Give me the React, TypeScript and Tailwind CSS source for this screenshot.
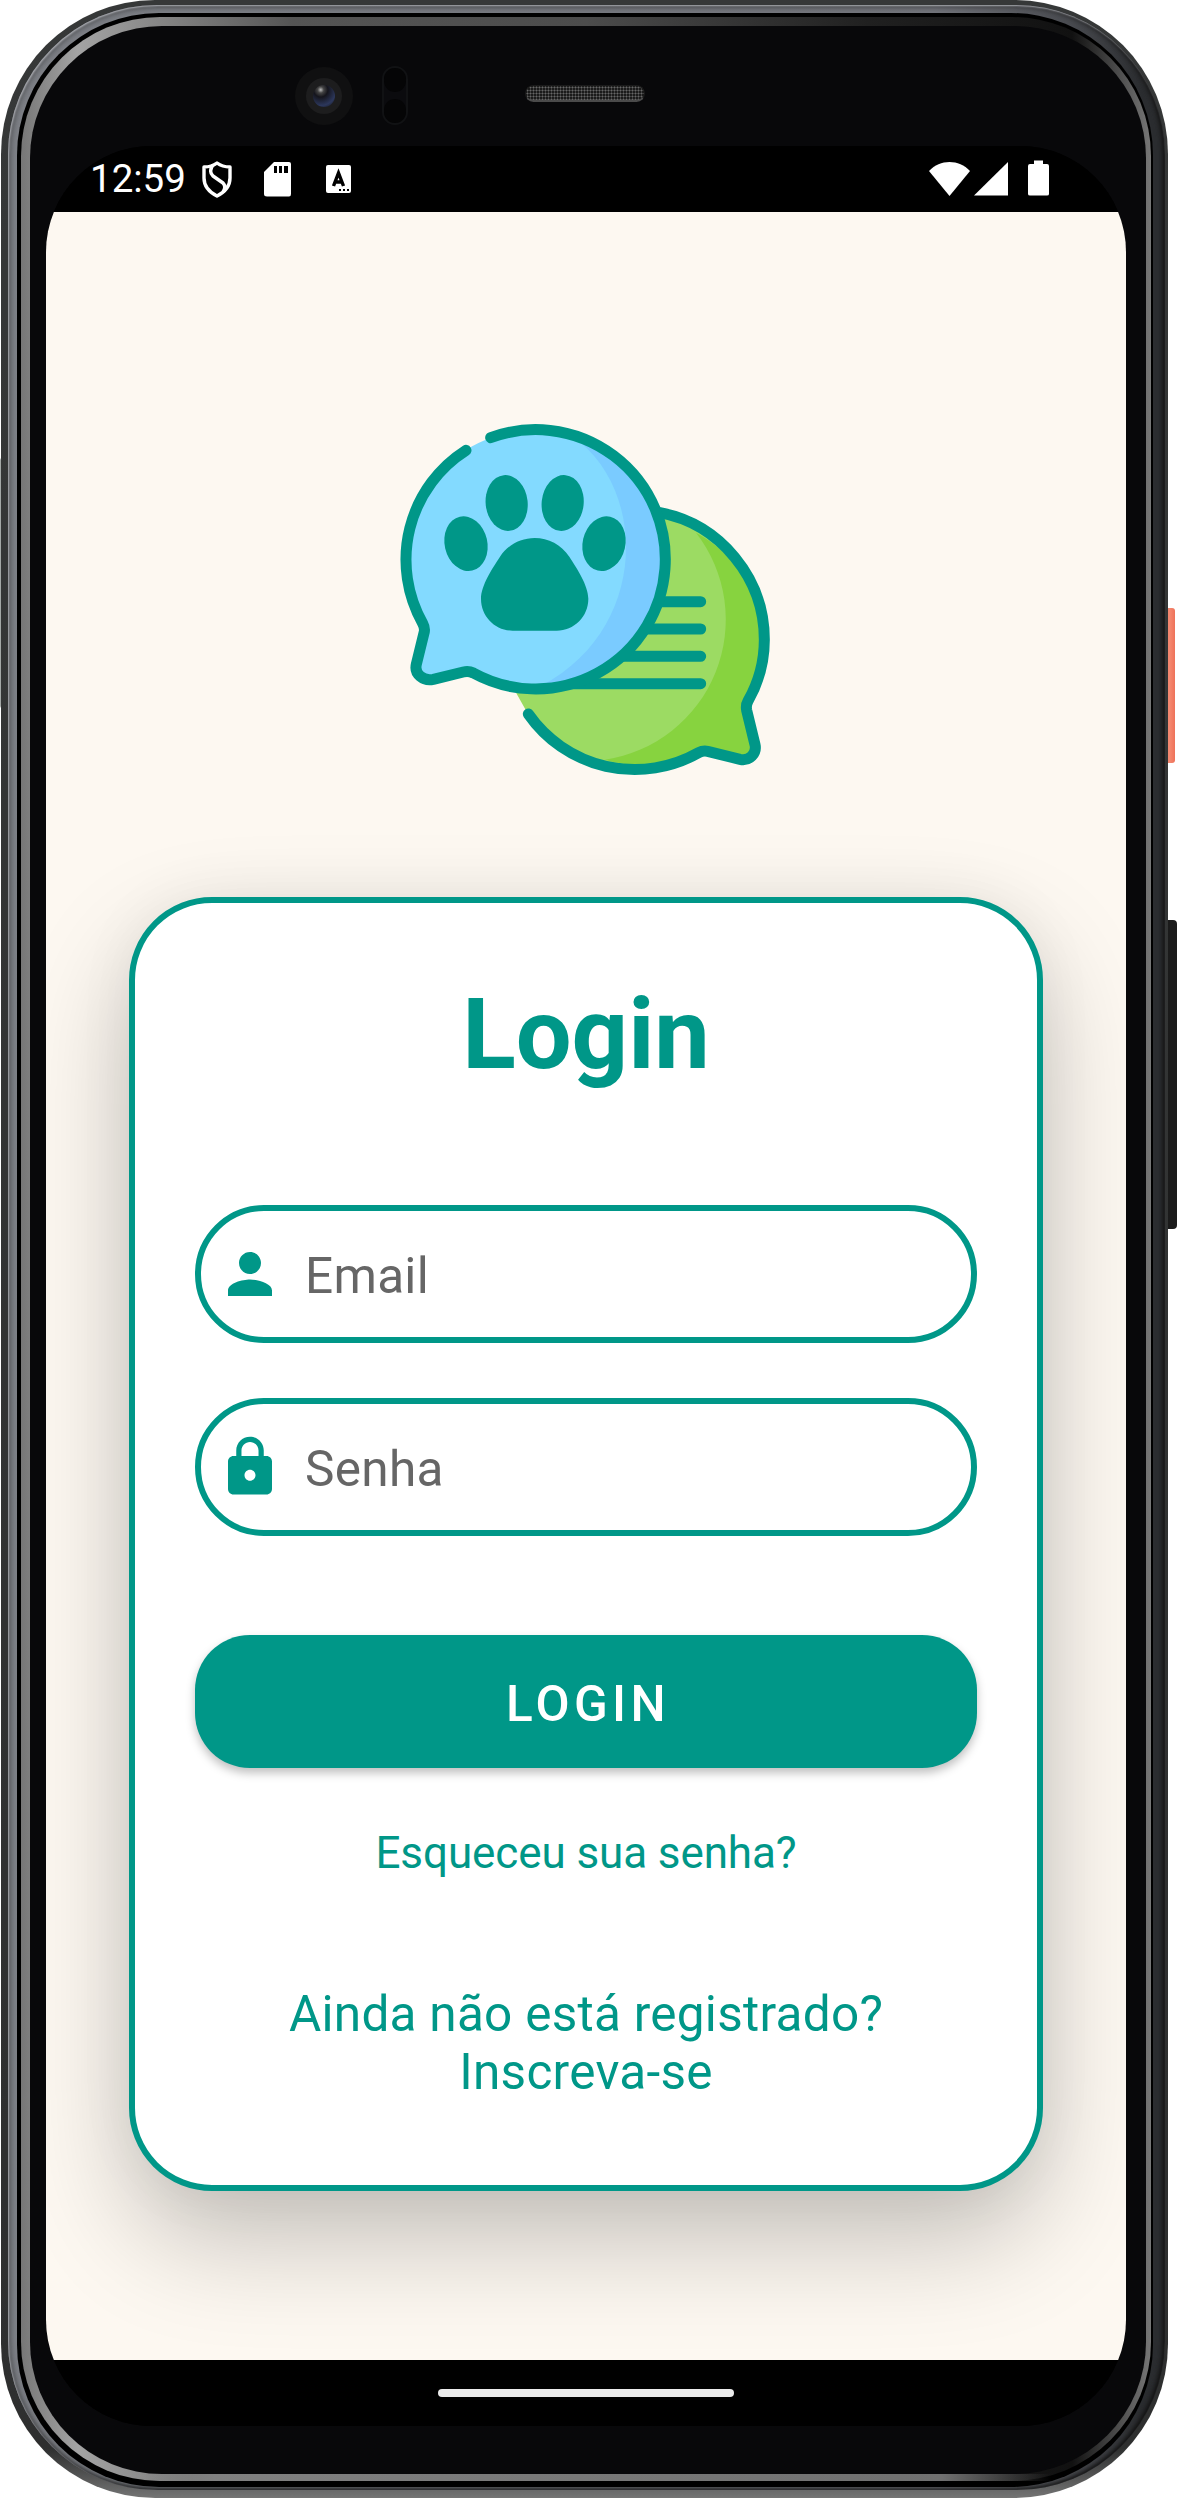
import React from "react";

const TEAL = "#009788";

function Logo() {
  return (
    <svg width="410" height="400" viewBox="0 0 1230 1200" fill="none" strokeLinecap="round" strokeLinejoin="round">
      <path
        fill="#9cdb63"
        d="M409 880 L444 942 A389 389 0 0 0 965 1054 L1078 1079 Q1126 1083 1126 1038 L1099 928 Q1153 832 1153 719 A389 389 0 0 0 840 338 Z"
      />
      <path
        fill="#87d33f"
        d="M948 398 A425 425 0 0 1 675 1079 A389 389 0 0 0 965 1054 L1078 1079 Q1126 1083 1126 1038 L1099 928 Q1153 832 1153 719 A389 389 0 0 0 948 398 Z"
      />
      <path
        stroke={TEAL}
        strokeWidth="33"
        d="M840 338 C1020 372 1153 533 1153 719 C1153 782 1137 845 1104 903 Q1097 915 1100 931 L1125 1034 C1131 1061 1108 1084 1080 1078 L983 1054 Q969 1051 956 1058 A389 389 0 0 1 445 942"
      />
      <path stroke={TEAL} strokeWidth="33" d="M840 605H962M790 687H962M720 769H962M560 851H962" />
      <path
        fill="#83daff"
        d="M469 89 A389 389 0 1 1 277 817 Q266 811 250 815 L160 838 C130 844 104 823 108 793 L133 690 Q135 678 127 667 A389 389 0 0 1 469 89Z"
      />
      <path fill="#7acbff" d="M600 126 C800 290 800 690 485 857 A381 381 0 0 0 858 479 A389 389 0 0 0 600 126Z" />
      <path
        stroke={TEAL}
        strokeWidth="33"
        d="M332 113 A389 389 0 1 1 280 819 Q266 812 250 816 L160 838 C130 844 102 823 109 793 L133 695 Q135 683 128 670 A389 389 0 0 1 258 151"
      />
      <g fill={TEAL}>
        <ellipse cx="258" cy="431" rx="64" ry="83" transform="rotate(-13 258 431)" />
        <ellipse cx="380" cy="309" rx="63" ry="84" transform="rotate(-6 380 309)" />
        <ellipse cx="548" cy="309" rx="63" ry="84" transform="rotate(6 548 309)" />
        <ellipse cx="672" cy="431" rx="64" ry="83" transform="rotate(13 672 431)" />
        <path d="M464 414 C505 414 544 434 568 470 C590 504 625 556 625 596 C625 650 582 692 530 692 H398 C346 692 303 650 303 596 C303 556 338 504 360 470 C384 434 423 414 464 414Z" />
      </g>
    </svg>
  );
}

function StatusBar() {
  return (
    <div className="flex h-[66px] shrink-0 items-start bg-black pl-[44px] text-white">
      <span className="mt-[11px] w-[96px] text-[38.500px] leading-[44px] whitespace-nowrap">12:59</span>
      <svg className="mt-[14px] ml-[15px]" width="32" height="39" viewBox="0 0 32 39" fill="none" stroke="white" strokeWidth="3.4" strokeLinejoin="round">
        <path d="M16 3C20 6 24 7 29 7V18C29 26 24 32 16 36C8 32 3 26 3 18V7C8 7 12 6 16 3Z" />
        <path d="M12 5C9 9 9 13 12 16L22 23C25 26 24 29 22 32" />
      </svg>
      <svg className="mt-[16px] ml-[31px]" width="28" height="35" viewBox="0 0 28 35">
        <path fill="white" d="M10 0H25Q27 0 27 2V32Q27 34.500 25 34.500H3Q0 34.500 0 32V10Z" />
        <path fill="black" d="M10 4h3v7h-3zM15 4h3v7h-3zM20 4h4v7h-4z" />
      </svg>
      <svg className="mt-[19px] ml-[34px] rounded-[2px] bg-white" width="25" height="28" viewBox="0 0 25 28" fill="none">
        <path stroke="black" strokeWidth="3.400" d="M7.500 21 12.500 8 17.500 21M9 17H16" />
        <path fill="black" d="M13 24h2v2h-2zM17 24h2v2h-2zM21 24h2v2h-2z" />
      </svg>
      <svg className="mt-[14px] mr-[77px] ml-auto" width="120" height="36" viewBox="0 0 120 36" fill="white">
        <path d="M0 11C11 -1 30 -1 41 11L20.500 36Z" />
        <path d="M79 2V35.500H45Z" />
        <path d="M105 .500h9V4h4Q120 4 120 6V34Q120 35.500 118 35.500H101Q99 35.500 99 34V6Q99 4 101 4h4Z" />
      </svg>
    </div>
  );
}

function Field({ label, children }: { label: string; children: React.ReactNode }) {
  return (
    <div className="flex h-[138px] items-center rounded-full border-[6px] border-[#009788] pl-[16px]">
      <svg width="66" height="66" viewBox="0 0 24 24" fill={TEAL}>
        {children}
      </svg>
      <span className="ml-[22px] pt-[4px] text-[49.500px] leading-[58px] tracking-[0.300px] text-[#666]">{label}</span>
    </div>
  );
}

function LoginCard() {
  return (
    <div className="mx-[83px] mt-[97px] flex h-[1294px] flex-col rounded-[83px] border-[6px] border-[#009788] bg-white px-[60px] shadow-[0_48px_110px_rgba(0,0,0,0.23),0_0_60px_rgba(0,0,0,0.05)]">
      <h1 className="mt-[73px] text-center text-[99px] leading-[116px] font-bold text-[#009788]">Login</h1>
      <div className="mt-[113px] flex flex-col gap-[55px]">
        <Field label="Email">
          <path d="M12 12c2.210 0 4-1.790 4-4s-1.790-4-4-4-4 1.790-4 4 1.790 4 4 4zm0 2c-2.670 0-8 1.340-8 4v2h16v-2c0-2.660-5.330-4-8-4z" />
        </Field>
        <Field label="Senha">
          <path d="M18 8h-1V6c0-2.760-2.240-5-5-5S7 3.240 7 6v2H6c-1.100 0-2 .9-2 2v10c0 1.100.9 2 2 2h12c1.100 0 2-.9 2-2V10c0-1.100-.9-2-2-2zm-6 9c-1.100 0-2-.9-2-2s.9-2 2-2 2 .9 2 2-.9 2-2 2zm3.100-9H8.900V6c0-1.710 1.390-3.100 3.100-3.100 1.710 0 3.100 1.390 3.100 3.100v2z" />
        </Field>
      </div>
      <button className="mt-[99px] h-[133px] shrink-0 rounded-[55px] bg-[#009788] pt-[6px] pl-[4px] text-[49.500px] font-medium tracking-[4.400px] text-white shadow-[0_5px_10px_rgba(0,0,0,0.25)]">
        LOGIN
      </button>
      <p className="mt-[59px] text-center text-[44px] leading-[52px] tracking-[-0.100px] text-[#009788]">
        Esqueceu sua senha?
      </p>
      <p className="mt-[106px] text-center text-[49.500px] leading-[58px] tracking-[0.270px] text-[#009788]">
        Ainda não está registrado?
        <br />
        Inscreva-se
      </p>
    </div>
  );
}

function FrontHardware() {
  return (
    <div className="flex h-[120px] items-start">
      <span className="mt-[41px] ml-[249px] flex size-[58px] items-center justify-center rounded-full bg-[#101011]">
        <span className="flex size-[36px] items-center justify-center rounded-full bg-[#1d1d1e]">
          <span className="size-[22px] rounded-full bg-[radial-gradient(circle_at_35%_22%,#bbb_0,#444_14%,#15151c_32%,#2c375c_70%,#111_100%)]" />
        </span>
      </span>
      <span className="mt-[40px] ml-[29px] flex h-[59px] w-[26px] flex-col justify-between rounded-full border-2 border-[#111214] bg-[#0b0b0e]">
        <span className="h-[24px] rounded-full bg-[#050506]" />
        <span className="h-[24px] rounded-full bg-[#050506]" />
      </span>
      <span className="mt-[59px] ml-[117px] h-[17px] w-[120px] rounded-full border border-b-2 border-[#1a1a1a] border-b-[#4a4a4a] bg-[#1a1a1a] bg-[radial-gradient(#666_0.800px,transparent_1.200px)] bg-[size:3px_3px]" />
    </div>
  );
}

export default function App() {
  return (
    <div className="relative h-[2498px] w-[1178px] overflow-hidden bg-white font-['Roboto',sans-serif]">
      <span className="absolute top-[608px] left-[1163px] h-[155px] w-[12px] rounded-[3px] bg-linear-to-r from-[#e9694d] via-[#f58a72] to-[#ee7259]" />
      <span className="absolute top-[920px] left-[1164px] h-[309px] w-[13px] rounded-[4px] bg-[#1b1b1b]" />
      <span className="absolute top-[458px] left-0 h-[250px] w-[4px] rounded-[3px] bg-[#a3a8a6]" />
      <div className="relative ml-px h-[2498px] w-[1167px] rounded-[154px] bg-linear-to-b from-[#363838] from-0% via-[#2e2f2f] via-98% to-[#747474] to-100% pt-[5px] pr-[3px] pb-[8px] pl-[7px]">
        <div className="h-full rounded-[149px] bg-[linear-gradient(to_right,#7f8288_0%,#74767d_80%,#494b50_92%,#2b2d30_98%)] pt-[8px] pr-[12px] pb-[3px] pl-[9px] shadow-[inset_1px_1px_2px_#b0b2b8,inset_-2px_-1px_4px_#111,inset_0_0_9px_#222]">
          <div className="h-full rounded-[142px] bg-black pt-[4px] pr-[2px] pb-[6px] pl-[4px]">
            <div className="relative h-full rounded-[139px] bg-[linear-gradient(to_right,#777_0%,#a4a4a4_5%,#555_24%,#4c4c4c_50%,#202020_75%,#111_93%,#777_100%)] pt-[9px] pr-[5px] pb-[7px] pl-[9px]">
              <span className="absolute right-[100px] bottom-0 left-[120px] h-[7px] bg-[linear-gradient(to_right,transparent,#808080_8%,#707070_88%,transparent)]" />
              <div className="relative h-full rounded-[132px] bg-[#08080a] pl-[16px]">
                <FrontHardware />
                <div className="flex h-[2280px] w-[1080px] flex-col overflow-hidden rounded-[106px] bg-black">
                  <StatusBar />
                  <main className="flex h-[2148px] flex-col overflow-hidden bg-[#fdf8f1]">
                    <div className="mt-[188px] ml-[334px]">
                      <Logo />
                    </div>
                    <LoginCard />
                  </main>
                  <div className="flex h-[66px] shrink-0 items-center justify-center bg-black">
                    <span className="h-[8px] w-[296px] rounded-full bg-[#ebebeb]" />
                  </div>
                </div>
              </div>
            </div>
          </div>
        </div>
      </div>
    </div>
  );
}
